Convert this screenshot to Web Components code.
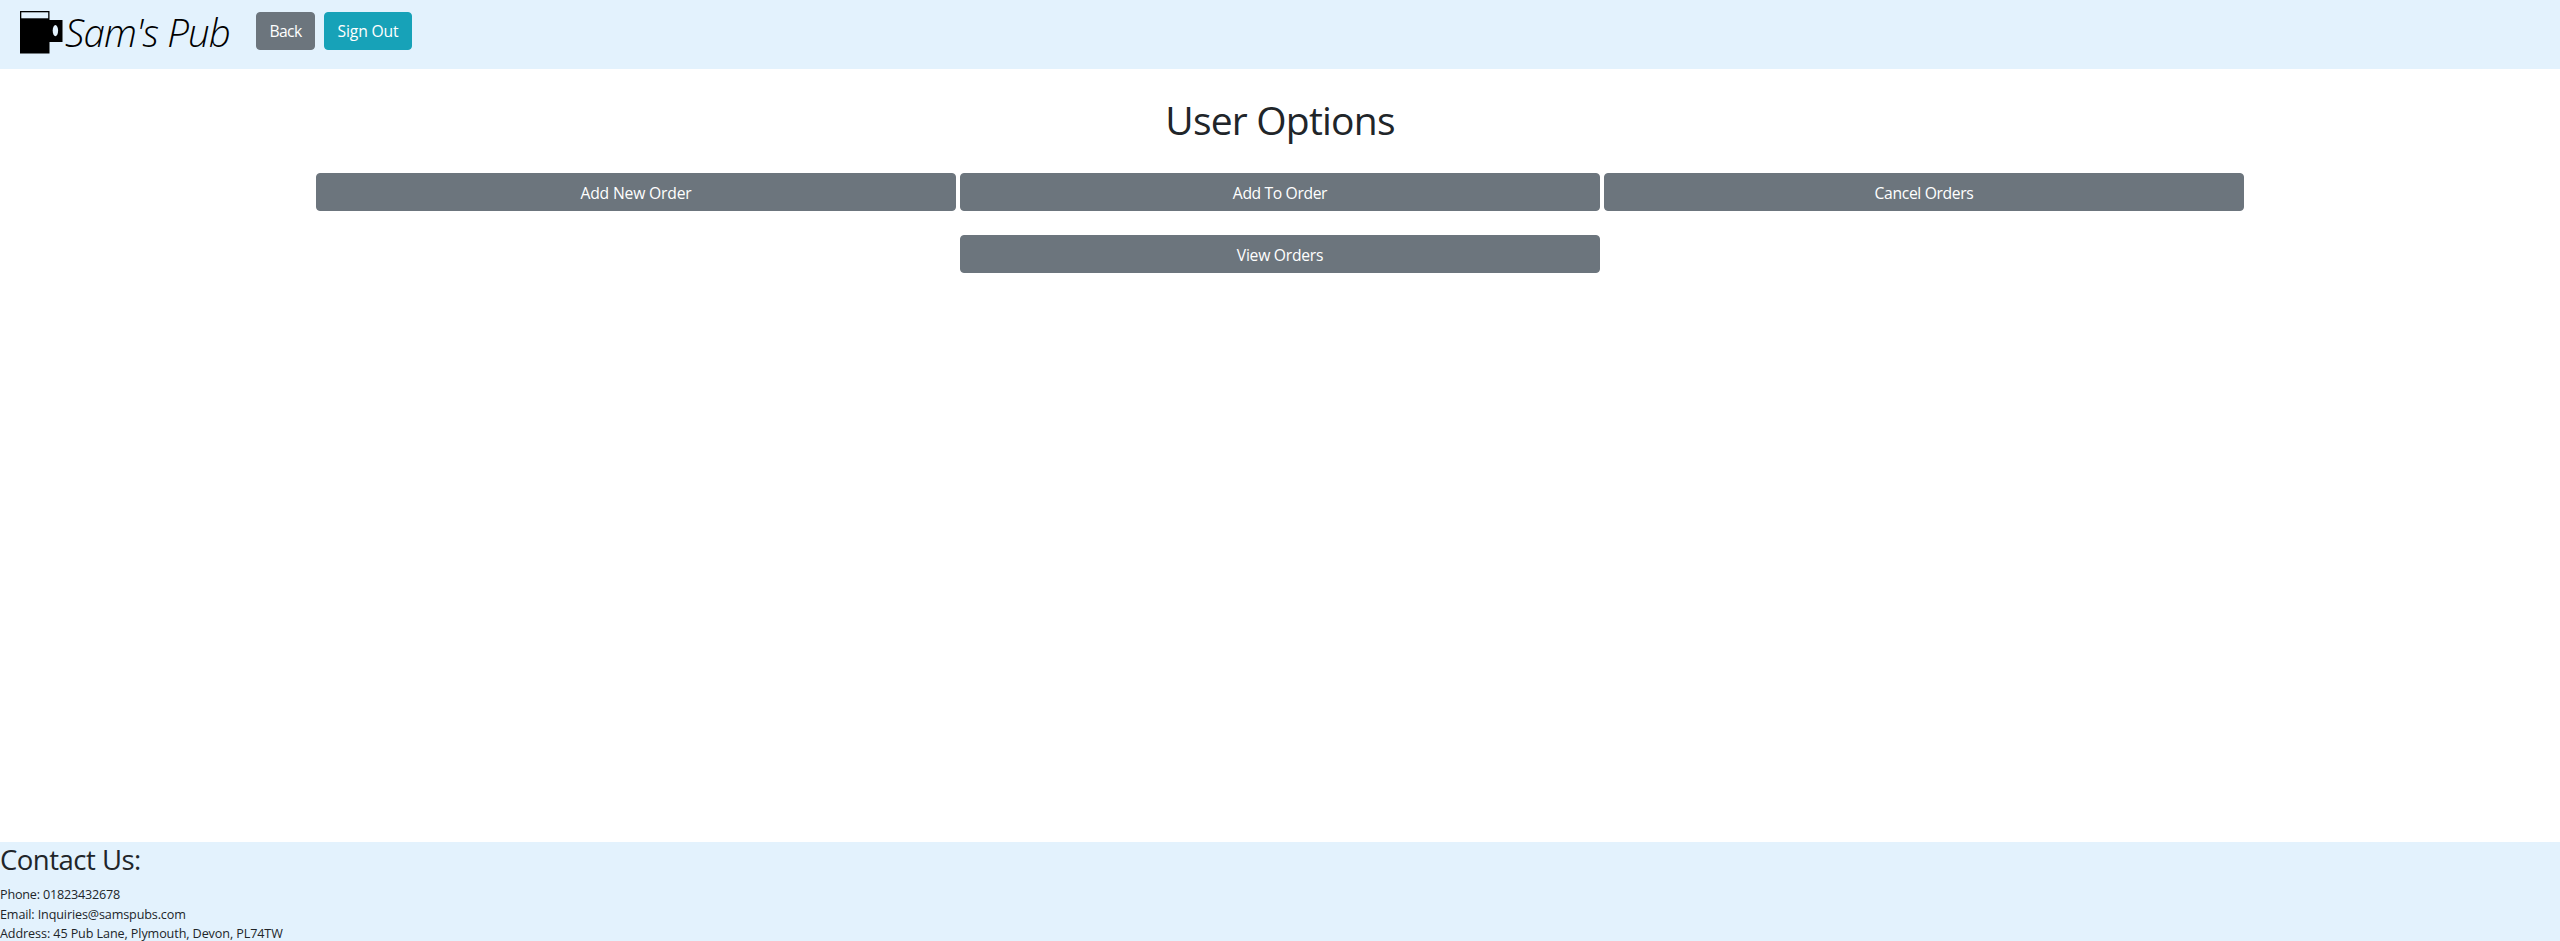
<!DOCTYPE html>
<html lang="en">
<head>
<meta charset="utf-8">
<title>Sam's Pub</title>
<style>
body { margin: 0; font-family: "Open Sans", "Noto Sans", sans-serif; color: #212529; background: #fff; }
</style>
</head>
<body>
<pub-page>
  <pub-navbar slot="nav">
    <pub-brand slot="brand">Sam's Pub</pub-brand>
    <pub-button style="width:59px;--ls:-.6px">Back</pub-button>
    <pub-button kind="info" style="width:88px;--ls:-.15px">Sign Out</pub-button>
  </pub-navbar>
  <pub-options>
    <span slot="title">User Options</span>
    <pub-button block style="--ls:-.18px">Add New Order</pub-button>
    <pub-button block style="--ls:-.37px">Add To Order</pub-button>
    <pub-button block style="--ls:-.36px">Cancel Orders</pub-button>
    <pub-button block slot="second" style="--ls:-.27px">View Orders</pub-button>
  </pub-options>
  <pub-contact slot="footer">
    <span slot="title">Contact Us:</span>
    <div style="letter-spacing:-.19px">Phone: 01823432678</div>
    <div style="letter-spacing:-.13px">Email: Inquiries@samspubs.com</div>
    <div style="letter-spacing:-.1px">Address: 45 Pub Lane, Plymouth, Devon, PL74TW</div>
  </pub-contact>
</pub-page>
<script>
const define = (name, html) => customElements.define(name, class extends HTMLElement {
  constructor() {
    super();
    this.attachShadow({ mode: 'open' }).innerHTML = html;
  }
});

define('pub-page', `
<style>
:host { display: flex; flex-direction: column; height: 941px; overflow: hidden; }
main { flex: 1; }
</style>
<slot name="nav"></slot><main><slot></slot></main><slot name="footer"></slot>`);

define('pub-navbar', `
<style>
:host { display: flex; box-sizing: border-box; height: 69px; padding: 0 20px; background: #e3f2fd; }
.actions { display: flex; gap: 9px; padding-top: 12px; }
</style>
<slot name="brand"></slot><div class="actions"><slot></slot></div>`);

define('pub-brand', `
<style>
:host { display: flex; width: 236px; color: #000; }
svg { flex: none; width: 43px; height: 43px; margin-top: 11px; }
span { margin-left: 2px; padding-top: 4px; font-size: 38.5px; line-height: 56px; font-style: italic; font-weight: 300; letter-spacing: -.85px; white-space: nowrap; }
</style>
<svg viewBox="0 0 43 43">
  <path d="M0 0H29.5V9H42.5V31H29.5V42.5H0Z"/>
  <path d="M1.3 1.3H28.2V7.3H1.3Z" fill="#e3f2fd"/>
  <ellipse cx="35.4" cy="19.6" rx="2.7" ry="5.6" fill="#e3f2fd"/>
</svg><span><slot></slot></span>`);

define('pub-button', `
<style>
:host { display: block; }
button { display: block; box-sizing: border-box; width: 100%; height: 38px; margin: 0; padding: 6px 0; border: 1px solid #6c757d; border-radius: 4px; background: #6c757d; color: #fff; font: 15.7px/24px "Open Sans", "Noto Sans", sans-serif; letter-spacing: var(--ls, 0); text-align: center; white-space: nowrap; }
:host([kind=info]) button { background: #17a2b8; border-color: #17a2b8; }
:host([block]) { width: 640px; }
:host([block]) button { padding: 7px 0 5px; }
</style>
<button type="button"><slot></slot></button>`);

define('pub-options', `
<style>
:host { display: block; padding-top: 27px; }
h1 { margin: 0 0 29px; font-size: 39px; line-height: 48px; font-weight: 400; letter-spacing: -.79px; text-align: center; }
.row { display: flex; justify-content: center; gap: 4px; margin-bottom: 24px; }
</style>
<h1><slot name="title"></slot></h1>
<div class="row"><slot></slot></div>
<div class="row"><slot name="second"></slot></div>`);

define('pub-contact', `
<style>
:host { display: block; box-sizing: border-box; height: 99px; padding-top: 1px; background: #e3f2fd; font-size: 12.6px; line-height: 19.5px; }
h3 { margin: 0 0 8px; font-size: 27.5px; line-height: 34px; font-weight: 400; letter-spacing: -.5px; }
</style>
<h3><slot name="title"></slot></h3><slot></slot>`);
</script>
</body>
</html>
